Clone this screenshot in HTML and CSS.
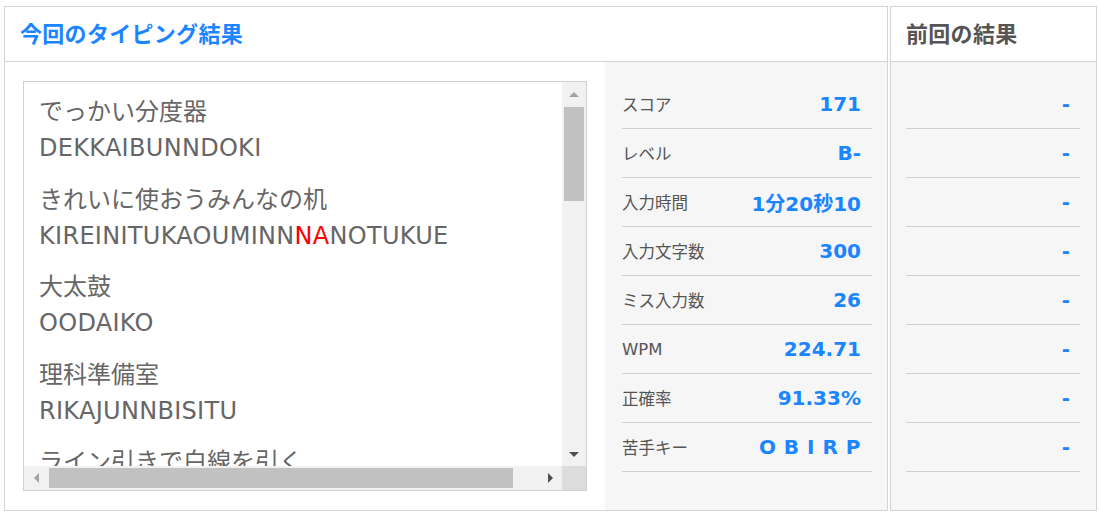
FILE: index.html
```html
<!DOCTYPE html>
<html lang="ja">
<head>
<meta charset="utf-8">
<title>タイピング結果</title>
<link rel="stylesheet" href="styles.css">
</head>
<body>
<div class="page">
  <section class="panel panel-main">
    <header class="panel-head"><h2 class="title title-blue">今回のタイピング結果</h2></header>
    <div class="panel-body main-body">
      <div class="words-wrap">
        <div class="words-box">
          <div class="words">
            <div class="word"><div>でっかい分度器</div><div class="roma">DEKKAIBUNNDOKI</div></div>
            <div class="word"><div>きれいに使おうみんなの机</div><div class="roma">KIREINITUKAOUMINN<span class="miss">NA</span>NOTUKUE</div></div>
            <div class="word"><div>大太鼓</div><div class="roma">OODAIKO</div></div>
            <div class="word"><div>理科準備室</div><div class="roma">RIKAJUNNBISITU</div></div>
            <div class="word"><div>ライン引きで白線を引く</div><div class="roma">RAINNHIKIDEHAKUSENNWOHIKU</div></div>
          </div>
          <div class="vbar">
            <div class="sb-btn"><span class="tri tri-up"></span></div>
            <div class="vthumb"></div>
            <div class="sb-fill"></div>
            <div class="sb-btn"><span class="tri tri-down"></span></div>
          </div>
          <div class="hbar">
            <div class="sb-btn"><span class="tri tri-left"></span></div>
            <div class="hthumb"></div>
            <div class="sb-fill"></div>
            <div class="sb-btn"><span class="tri tri-right"></span></div>
          </div>
          <div class="corner"></div>
        </div>
      </div>
      <div class="stats">
        <div class="row"><span class="label">スコア</span><span class="value">171</span></div>
        <div class="row"><span class="label">レベル</span><span class="value">B-</span></div>
        <div class="row"><span class="label">入力時間</span><span class="value">1分20秒10</span></div>
        <div class="row"><span class="label">入力文字数</span><span class="value">300</span></div>
        <div class="row"><span class="label">ミス入力数</span><span class="value">26</span></div>
        <div class="row"><span class="label">WPM</span><span class="value">224.71</span></div>
        <div class="row"><span class="label">正確率</span><span class="value">91.33%</span></div>
        <div class="row"><span class="label">苦手キー</span><span class="value keys">O B I R P</span></div>
      </div>
    </div>
  </section>
  <section class="panel panel-prev">
    <header class="panel-head"><h2 class="title title-gray">前回の結果</h2></header>
    <div class="panel-body prev-body">
      <div class="row"><span class="value">-</span></div>
      <div class="row"><span class="value">-</span></div>
      <div class="row"><span class="value">-</span></div>
      <div class="row"><span class="value">-</span></div>
      <div class="row"><span class="value">-</span></div>
      <div class="row"><span class="value">-</span></div>
      <div class="row"><span class="value">-</span></div>
      <div class="row"><span class="value">-</span></div>
    </div>
  </section>
</div>
</body>
</html>
```
FILE: styles.css
```css
* { box-sizing: border-box; }
html, body { margin: 0; padding: 0; background: #fff; }
body {
  font-family: "DejaVu Sans", "Noto Sans CJK JP", sans-serif;
  color: #555;
}
.page {
  display: flex;
  gap: 2px;
  padding: 6px 0 0 4px;
}
.panel {
  border: 1px solid #d3d3d3;
  display: flex;
  flex-direction: column;
  height: 505px;
}
.panel-main { width: 884px; }
.panel-prev { width: 207px; }
.panel-head {
  height: 55px;
  border-bottom: 1px solid #d3d3d3;
  display: flex;
  align-items: center;
  padding: 0 15px 5px;
  background: #fff;
}
.title {
  margin: 0;
  font-family: "Noto Sans CJK JP", sans-serif;
  font-weight: 700;
  font-size: 22px;
  letter-spacing: 0.3px;
}
.title-blue { color: #1a85ff; }
.title-gray { color: #555; }
.panel-body { flex: 1; }
.main-body { display: flex; }
.words-wrap {
  flex: 0 0 600px;
  padding: 19px 18px;
  background: #fff;
}
.words-box {
  height: 410px;
  border: 1px solid #d0d0d0;
  display: grid;
  grid-template-columns: 1fr 24px;
  grid-template-rows: 1fr 24px;
}
.words {
  overflow: hidden;
  padding: 12px 15px 0;
  font-size: 24px;
  line-height: 36px;
  color: #666;
  white-space: nowrap;
}
.word { margin-bottom: 15.5px; }
.roma { letter-spacing: 0.3px; }
.miss { color: #ff0000; }
.vbar, .hbar {
  background: #f1f1f1;
  display: flex;
}
.vbar { flex-direction: column; }
.sb-btn {
  flex: 0 0 24px;
  display: flex;
  align-items: center;
  justify-content: center;
}
.sb-fill { flex: 1; }
.vthumb {
  margin: 1px 2px 0;
  height: 94px;
  background: #c1c1c1;
}
.hthumb {
  margin: 2px 0 2px 1px;
  width: 464px;
  background: #c1c1c1;
}
.corner { background: #dcdcdc; }
.tri { width: 0; height: 0; display: block; }
.tri-up {
  border-left: 5px solid transparent;
  border-right: 5px solid transparent;
  border-bottom: 5px solid #a3a3a3;
}
.tri-down {
  border-left: 5px solid transparent;
  border-right: 5px solid transparent;
  border-top: 5px solid #505050;
}
.tri-left {
  border-top: 5px solid transparent;
  border-bottom: 5px solid transparent;
  border-right: 5px solid #a3a3a3;
}
.tri-right {
  border-top: 5px solid transparent;
  border-bottom: 5px solid transparent;
  border-left: 5px solid #505050;
}
.stats {
  flex: 1;
  background: #f6f6f6;
  padding: 18px 15px 0 17px;
}
.prev-body {
  background: #f6f6f6;
  padding: 18px 16px 0 15px;
}
.row {
  height: 49px;
  border-bottom: 1px solid #d0d0d0;
  display: flex;
  align-items: center;
  justify-content: space-between;
  padding: 0 11px 0 0;
}
.prev-body .row { justify-content: flex-end; padding-right: 10px; }
.label {
  font-size: 16.5px;
  color: #555;
  font-family: "DejaVu Sans", "Noto Sans CJK JP", sans-serif;
}
.value {
  font-weight: 700;
  font-size: 20px;
  color: #1a85ff;
}
.keys { letter-spacing: 0.5px; }
```
